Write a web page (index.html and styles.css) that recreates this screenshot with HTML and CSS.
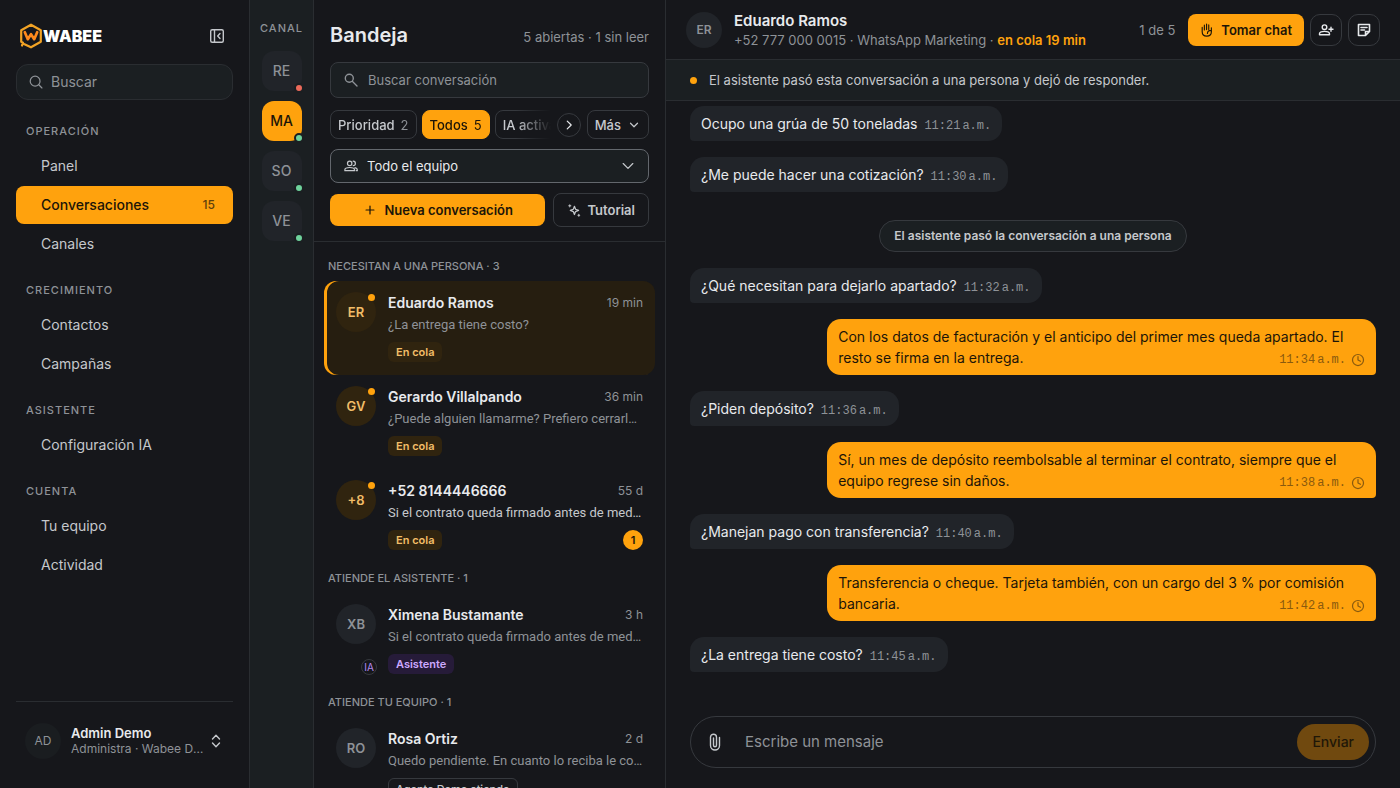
FILE: index.html
```html
<!DOCTYPE html>
<html lang="es">
<head>
<meta charset="utf-8">
<title>Wabee · Bandeja</title>
<meta name="viewport" content="width=device-width, initial-scale=1">
<link rel="stylesheet" href="styles.css">
</head>
<body>
<div class="app">
  <aside class="sidebar">
    <div class="brand">
      <a class="logo" href="#" aria-label="Wabee">
        <svg class="logo-mark" viewBox="0 0 24 26" aria-hidden="true">
          <path d="M5.500 21.200 12 24.300 21.800 18.800V7.200L12 1.700 2.200 7.200V18.800L4 19.800 3 22.500" fill="none" stroke="#f2a325" stroke-width="2.200"/>
          <path d="M5.800 9.200 8.800 16.200 12 11.200 15.200 16.200 18.200 9.200" fill="none" stroke="#ff8a1c" stroke-width="2.700"/>
        </svg>
        <span class="logo-text">WABEE</span>
      </a>
      <button class="icon-plain" aria-label="Contraer menú">
        <svg class="ic16" viewBox="0 0 16 16" aria-hidden="true"><rect x="1.700" y="1.700" width="12.600" height="12.600" rx="1.500"/><path d="M5.500 2v12M11 5.500 8.700 8l2.300 2.500"/></svg>
      </button>
    </div>
    <label class="side-search">
      <svg class="ic14" viewBox="0 0 16 16" aria-hidden="true"><circle cx="7" cy="7" r="5.600"/><path d="m11.200 11.200 3.600 3.600"/></svg>
      <input type="search" placeholder="Buscar" aria-label="Buscar">
    </label>
    <nav class="nav">
      <section class="nav-group">
        <h2>OPERACIÓN</h2>
        <a href="#">Panel</a>
        <a href="#" class="active" aria-current="page">Conversaciones <span>15</span></a>
        <a href="#">Canales</a>
      </section>
      <section class="nav-group">
        <h2>CRECIMIENTO</h2>
        <a href="#">Contactos</a>
        <a href="#">Campañas</a>
      </section>
      <section class="nav-group">
        <h2>ASISTENTE</h2>
        <a href="#">Configuración IA</a>
      </section>
      <section class="nav-group">
        <h2>CUENTA</h2>
        <a href="#">Tu equipo</a>
        <a href="#">Actividad</a>
      </section>
    </nav>
    <button class="account">
      <span class="account-avatar">AD</span>
      <span class="account-text"><strong>Admin Demo</strong><span>Administra · Wabee Demo</span></span>
      <svg class="ic16" viewBox="0 0 16 16" aria-hidden="true"><path d="m4.500 6 3.500-3.700L11.500 6M4.500 10l3.500 3.700 3.500-3.700"/></svg>
    </button>
  </aside>

  <nav class="rail" aria-label="Canal">
    <h2>CANAL</h2>
    <button>RE<i class="off"></i></button>
    <button class="active">MA<i></i></button>
    <button>SO<i></i></button>
    <button>VE<i></i></button>
  </nav>

  <section class="inbox">
    <header class="inbox-head">
      <div class="inbox-title"><h1>Bandeja</h1><span>5 abiertas · 1 sin leer</span></div>
      <label class="inbox-search">
        <svg class="ic16" viewBox="0 0 16 16" aria-hidden="true"><circle cx="6.300" cy="6.300" r="4"/><path d="m9.500 9.500 4.500 4.500"/></svg>
        <input type="search" placeholder="Buscar conversación" aria-label="Buscar conversación">
      </label>
      <div class="filters">
        <div class="filter-scroll">
          <button class="chip">Prioridad <span>2</span></button>
          <button class="chip active">Todos <span>5</span></button>
          <button class="chip">IA activa</button>
        </div>
        <button class="next" aria-label="Más filtros"><svg class="ic14" viewBox="0 0 16 16" aria-hidden="true"><path d="m6 3.500 4.500 4.500L6 12.500"/></svg></button>
        <button class="chip more">Más <svg class="ic14" viewBox="0 0 16 16" aria-hidden="true"><path d="m4 6 4 4 4-4"/></svg></button>
      </div>
      <div class="team">
        <svg class="ic14" viewBox="0 0 16 16" aria-hidden="true"><circle cx="6.500" cy="5" r="2.500"/><path d="M1 13.300v-1.100C1 10.500 4 9.700 6.500 9.700s5.500.8 5.500 2.500v1.100zM10.500 2.500a2.500 2.500 0 0 1 0 5M12.500 9.900c1.500.5 2.700 1.200 2.700 2.300v1.100H14"/></svg>
        <select aria-label="Equipo"><option>Todo el equipo</option></select>
        <svg class="ic14" viewBox="0 0 16 16" aria-hidden="true"><path d="m2.500 5.200 5.500 5.500 5.500-5.500"/></svg>
      </div>
      <div class="actions">
        <button class="primary new"><svg class="ic14" viewBox="0 0 16 16" aria-hidden="true"><path d="M8 3.500v9M3.500 8h9"/></svg>Nueva conversación</button>
        <button class="outline"><svg class="ic14" viewBox="0 0 16 16" aria-hidden="true"><path d="M8.500 3.800 9.800 7.200 13.200 8.500 9.800 9.800 8.500 13.200 7.200 9.800 3.800 8.500 7.200 7.200z"/><path d="M3.200 2v2.400M2 3.200h2.400M13.500 13v2M12.500 14h2" stroke-width="1.200"/></svg>Tutorial</button>
      </div>
    </header>

    <div class="list">
      <h2>NECESITAN A UNA PERSONA · 3</h2>
      <article class="item waiting selected">
        <span class="avatar">ER</span>
        <div class="item-body">
          <div class="row"><h3>Eduardo Ramos</h3><time>19 min</time></div>
          <p>¿La entrega tiene costo?</p>
          <div class="row tags"><span class="tag">En cola</span></div>
        </div>
      </article>
      <article class="item waiting">
        <span class="avatar">GV</span>
        <div class="item-body">
          <div class="row"><h3>Gerardo Villalpando</h3><time>36 min</time></div>
          <p>¿Puede alguien llamarme? Prefiero cerrarlo hoy</p>
          <div class="row tags"><span class="tag">En cola</span></div>
        </div>
      </article>
      <article class="item waiting unread">
        <span class="avatar">+8</span>
        <div class="item-body">
          <div class="row"><h3>+52 8144446666</h3><time>55 d</time></div>
          <p>Si el contrato queda firmado antes de mediodía</p>
          <div class="row tags"><span class="tag">En cola</span><span class="count">1</span></div>
        </div>
      </article>
      <h2>ATIENDE EL ASISTENTE · 1</h2>
      <article class="item">
        <span class="avatar">XB</span>
        <span class="ia">IA</span>
        <div class="item-body">
          <div class="row"><h3>Ximena Bustamante</h3><time>3 h</time></div>
          <p>Si el contrato queda firmado antes de mediodía</p>
          <div class="row tags"><span class="tag assistant">Asistente</span></div>
        </div>
      </article>
      <h2>ATIENDE TU EQUIPO · 1</h2>
      <article class="item">
        <span class="avatar">RO</span>
        <div class="item-body">
          <div class="row"><h3>Rosa Ortiz</h3><time>2 d</time></div>
          <p>Quedo pendiente. En cuanto lo reciba le confirmo</p>
          <div class="row tags"><span class="tag agent">Agente Demo atiende</span></div>
        </div>
      </article>
    </div>
  </section>

  <main class="chat">
    <header class="chat-head">
      <span class="chat-avatar">ER</span>
      <div class="chat-id">
        <h2>Eduardo Ramos</h2>
        <p>+52 777 000 0015 · WhatsApp Marketing · <strong>en cola 19 min</strong></p>
      </div>
      <span class="position">1 de 5</span>
      <button class="primary take">
        <svg class="ic14" viewBox="0 0 16 16" aria-hidden="true"><path d="M5 8V2.500M7.500 7.500V1.200M10 7.500V2.200M2.500 5v5c0 3 2 5 5.200 5 3.300 0 5.300-2 5.300-5V5.500M13 8.500c-2.500 0-4.500.8-4.500 3.500" stroke-width="1.300"/></svg>Tomar chat
      </button>
      <button class="square" aria-label="Asignar"><svg class="ic16" viewBox="0 0 16 16" aria-hidden="true"><circle cx="6.500" cy="5.200" r="2.300"/><path d="M1.500 12.700v-1c0-1.500 2.800-2.300 5-2.300s5 .8 5 2.300v1zM13 5.300v4M11 7.300h4"/></svg></button>
      <button class="square" aria-label="Notas"><svg class="ic16" viewBox="0 0 16 16" aria-hidden="true"><path d="M2.500 2.500h11v7l-4 4h-7zM13.300 9.500H9.500v3.800M5 5.500h6M5 8h3.500" stroke-width="1.600"/></svg></button>
    </header>
    <div class="notice"><i></i>El asistente pasó esta conversación a una persona y dejó de responder.</div>
    <div class="messages">
      <div class="bubble">Ocupo una grúa de 50 toneladas <time>11:21<span>a.m.</span></time></div>
      <div class="bubble">¿Me puede hacer una cotización? <time>11:30<span>a.m.</span></time></div>
      <div class="event">El asistente pasó la conversación a una persona</div>
      <div class="bubble">¿Qué necesitan para dejarlo apartado? <time>11:32<span>a.m.</span></time></div>
      <div class="bubble out">Con los datos de facturación y el anticipo del primer mes queda apartado. El resto se firma en la entrega. <time>11:34<span>a.m.</span><svg class="ic14" viewBox="0 0 16 16" aria-hidden="true"><circle cx="8" cy="8" r="6.300"/><path d="M8 4.200V8l2.800 1.500"/></svg></time></div>
      <div class="bubble">¿Piden depósito? <time>11:36<span>a.m.</span></time></div>
      <div class="bubble out">Sí, un mes de depósito reembolsable al terminar el contrato, siempre que el equipo regrese sin daños. <time>11:38<span>a.m.</span><svg class="ic14" viewBox="0 0 16 16" aria-hidden="true"><circle cx="8" cy="8" r="6.300"/><path d="M8 4.200V8l2.800 1.500"/></svg></time></div>
      <div class="bubble">¿Manejan pago con transferencia? <time>11:40<span>a.m.</span></time></div>
      <div class="bubble out">Transferencia o cheque. Tarjeta también, con un cargo del 3 % por comisión bancaria. <time>11:42<span>a.m.</span><svg class="ic14" viewBox="0 0 16 16" aria-hidden="true"><circle cx="8" cy="8" r="6.300"/><path d="M8 4.200V8l2.800 1.500"/></svg></time></div>
      <div class="bubble">¿La entrega tiene costo? <time>11:45<span>a.m.</span></time></div>
    </div>
    <form class="composer">
      <button type="button" class="icon-plain" aria-label="Adjuntar"><svg class="clip" viewBox="0 0 12 18" aria-hidden="true"><path d="M10.500 4.500v8a4.500 4.500 0 0 1-9 0V4.200a3 3 0 0 1 6 0v8a1.500 1.500 0 0 1-3 0V5"/></svg></button>
      <input type="text" placeholder="Escribe un mensaje" aria-label="Escribe un mensaje">
      <button type="submit" class="send" disabled>Enviar</button>
    </form>
  </main>
</div>
</body>
</html>
```
FILE: styles.css
```css
:root {
  --bg: #16171b;
  --panel: #1b1f22;
  --raised: #212429;
  --line: #2a2d31;
  --line-strong: #36393e;
  --text: #e8eaed;
  --soft: #c5c8cc;
  --muted: #8e9297;
  --accent: #ffa20d;
  --ink: #1c1508;
}
* { box-sizing: border-box; }
body {
  margin: 0;
  background: var(--bg);
  color: var(--text);
  font: 14px/20px Inter, "Liberation Sans", sans-serif;
}
h1, h2, h3, p { margin: 0; }
a { color: inherit; text-decoration: none; }
button, input, select { font: inherit; color: inherit; margin: 0; padding: 0; background: none; border: 0; }
input { min-width: 0; flex: 1; outline: 0; }
input::placeholder { color: var(--muted); opacity: 1; }
svg { flex: none; fill: none; stroke: currentColor; stroke-width: 1.4; stroke-linecap: round; stroke-linejoin: round; }
.ic14 { width: 14px; height: 14px; }
.ic16 { width: 16px; height: 16px; }

.app { display: grid; grid-template-columns: 250px 64px 352px minmax(0, 1fr); height: 100vh; overflow: hidden; }

.sidebar { display: flex; flex-direction: column; padding: 20px 16px; border-right: 1px solid var(--line); min-height: 0; }
.brand { display: flex; align-items: center; justify-content: space-between; height: 32px; padding: 0 8px 0 3px; }
.logo { display: flex; align-items: center; }
.logo-mark { width: 24px; height: 26px; }
.logo-text { font-size: 16px; font-weight: 900; color: #fff; }
.icon-plain { display: flex; color: var(--soft); }
.side-search { display: flex; align-items: center; gap: 8px; height: 36px; margin-top: 12px; padding: 0 12px; background: var(--panel); border: 1px solid var(--line); border-radius: 12px; color: var(--muted); }
.nav { display: flex; flex-direction: column; gap: 17px; margin-top: 21px; flex: 1; min-height: 0; }
.nav-group { display: flex; flex-direction: column; gap: 1px; }
.nav-group h2 { padding-left: 10px; margin-bottom: 5px; font-size: 11px; line-height: 20px; font-weight: 500; letter-spacing: 1px; color: var(--muted); }
.nav-group a { display: flex; align-items: center; justify-content: space-between; height: 38px; padding: 0 18px 0 25px; border-radius: 8px; color: var(--soft); }
.nav-group .active { background: var(--accent); color: var(--ink); font-weight: 500; }
.nav-group a span { font-size: 12px; color: #5f3f0c; }
.account { display: flex; align-items: center; text-align: left; padding: 21px 9px 9px; border-top: 1px solid var(--line); color: var(--soft); }
.account-avatar { display: grid; place-items: center; width: 36px; height: 36px; margin-right: 10px; border-radius: 50%; background: #1a1d20; font-size: 12px; color: var(--muted); }
.account-text { display: flex; flex-direction: column; flex: 1; min-width: 0; line-height: 15px; font-size: 12px; color: var(--muted); }
.account-text strong { font-size: 13px; font-weight: 600; color: var(--text); }
.account-text > span { overflow: hidden; text-overflow: ellipsis; white-space: nowrap; margin-right: 4px; }

.rail { display: flex; flex-direction: column; align-items: center; gap: 10px; padding-top: 18px; background: var(--panel); border-right: 1px solid var(--line); }
.rail h2 { margin-bottom: 3px; font-size: 11px; line-height: 20px; font-weight: 500; letter-spacing: 1px; color: var(--muted); }
.rail button { position: relative; width: 40px; height: 40px; border-radius: 12px; background: var(--raised); color: var(--muted); font-weight: 500; }
.rail .active { background: var(--accent); color: var(--ink); }
.rail i { position: absolute; right: -2px; bottom: -2px; width: 10px; height: 10px; border: 2px solid var(--panel); border-radius: 50%; background: #6fd39c; }
.rail .off { background: #ec6a5a; }

.inbox { display: flex; flex-direction: column; min-height: 0; border-right: 1px solid var(--line); }
.inbox-head { padding: 20px 16px 14px; border-bottom: 1px solid var(--line); }
.inbox-title { display: flex; align-items: center; justify-content: space-between; height: 30px; }
.inbox-title h1 { font-size: 20px; font-weight: 600; }
.inbox-title span { font-size: 13px; color: var(--muted); padding-top: 4px; }
.inbox-search { display: flex; align-items: center; gap: 9px; height: 36px; margin-top: 12px; padding: 0 12px; background: var(--panel); border: 1px solid var(--line-strong); border-radius: 8px; color: var(--muted); font-size: 13px; }
.filters { display: flex; align-items: center; gap: 6px; margin-top: 12px; }
.filter-scroll { display: flex; gap: 5px; flex: 1; min-width: 0; overflow: hidden; mask-image: linear-gradient(90deg, #000 84%, transparent 100%); }
.chip { display: flex; flex: none; align-items: center; justify-content: center; gap: 6px; height: 29px; padding: 0 7px; border: 1px solid var(--line-strong); border-radius: 8px; color: var(--soft); font-size: 13px; font-weight: 500; }
.chip span { font-weight: 400; color: var(--muted); }
.chip.active { background: var(--accent); border-color: var(--accent); color: var(--ink); }
.chip.active span { color: inherit; }
.next { display: grid; place-items: center; width: 24px; height: 24px; border: 1px solid var(--line-strong); border-radius: 50%; }
.team { display: flex; align-items: center; gap: 9px; height: 34px; margin-top: 10px; padding: 0 13px; background: var(--panel); border: 1px solid #63676d; border-radius: 8px; color: var(--soft); font-size: 13px; }
.team select { flex: 1; appearance: none; color: var(--text); outline: 0; }
.actions { display: flex; align-items: center; gap: 8px; margin-top: 10px; }
.primary, .outline { display: flex; align-items: center; justify-content: center; gap: 8px; border-radius: 8px; font-size: 13px; font-weight: 600; }
.primary { height: 32px; background: var(--accent); color: var(--ink); }
.new { flex: 1; }
.outline { height: 34px; padding: 0 13px; gap: 6px; border: 1px solid var(--line-strong); color: var(--soft); }

.list { flex: 1; min-height: 0; overflow: hidden; padding: 14px 10px 0; }
.list h2 { height: 20px; padding-left: 4px; margin-bottom: 5px; font-size: 11px; line-height: 20px; font-weight: 500; color: var(--muted); }
.item { position: relative; display: flex; gap: 12px; height: 94px; padding: 11px 12px; border-radius: 12px; }
.item + h2 { margin-top: 5px; }
.selected { background: #261e10; box-shadow: inset 3px 0 0 var(--accent); }
.avatar { position: relative; display: grid; place-items: center; flex: none; width: 40px; height: 40px; border-radius: 50%; background: var(--raised); color: var(--muted); font-size: 13px; font-weight: 600; }
.waiting .avatar { background: #30240f; color: #f2bd68; }
.waiting .avatar::after { content: ""; position: absolute; top: 2px; right: 1px; width: 7px; height: 7px; border-radius: 50%; background: var(--accent); }
.ia { position: absolute; left: 37px; top: 66px; display: grid; place-items: center; width: 16px; height: 16px; border: 1px solid var(--line-strong); border-radius: 50%; font-size: 10px; line-height: 14px; color: #b58af0; background: var(--bg); }
.item-body { flex: 1; min-width: 0; }
.row { display: flex; align-items: center; justify-content: space-between; }
.item h3 { font-size: 14px; line-height: 22px; font-weight: 600; }
.item time { font-size: 12px; color: var(--muted); }
.item p { font: 13px/22px Roboto, "Liberation Sans", sans-serif; overflow: hidden; white-space: nowrap; text-overflow: ellipsis; color: var(--muted); }
.unread p { color: var(--soft); }
.tags { margin-top: 6px; }
.tag { padding: 0 8px; border-radius: 6px; font-size: 11px; line-height: 20px; font-weight: 600; background: #30240f; color: #f2bd68; }
.assistant { background: #261b39; color: #cda9ff; }
.agent { padding: 0 7px; background: none; border: 1px solid var(--line-strong); color: var(--soft); font-weight: 500; }
.count { width: 20px; border-radius: 50%; background: var(--accent); color: var(--ink); font-size: 11px; line-height: 20px; font-weight: 600; text-align: center; }

.chat { display: flex; flex-direction: column; min-width: 0; min-height: 0; }
.chat-head { display: flex; align-items: center; height: 60px; flex: none; padding: 0 20px; border-bottom: 1px solid var(--line); }
.chat-avatar { display: grid; place-items: center; width: 36px; height: 36px; margin-right: 12px; border-radius: 50%; background: var(--raised); color: var(--muted); font-size: 12px; font-weight: 600; }
.chat-id { flex: 1; min-width: 0; }
.chat-id h2 { font-size: 15px; line-height: 20px; font-weight: 600; }
.chat-id p { font-size: 13px; line-height: 18px; color: var(--muted); white-space: nowrap; }
.chat-id strong { font-weight: 600; color: var(--accent); }
.position { font-size: 13px; color: var(--muted); margin-right: 13px; }
.take { padding: 0 12px; gap: 7px; }
.square { display: grid; place-items: center; width: 32px; height: 32px; margin-left: 6px; border: 1px solid var(--line-strong); border-radius: 10px; }
.notice { display: flex; align-items: center; gap: 12px; flex: none; height: 41px; padding: 0 24px; background: var(--panel); border-bottom: 1px solid var(--line); font-size: 13px; color: var(--soft); }
.notice i { width: 7px; height: 7px; border-radius: 50%; background: var(--accent); }
.messages { flex: 1; min-height: 0; overflow: hidden; display: flex; flex-direction: column; align-items: flex-start; gap: 16px; padding: 5px 24px 0; }
.bubble { flex: none; max-width: 80%; padding: 7px 11px; border-radius: 14px 14px 14px 4px; background: var(--raised); line-height: 21px; }
.bubble time { margin-left: 3px; font: 12px/12px "Liberation Mono", monospace; color: var(--muted); }
.bubble time span { margin-left: 2px; }
.out { align-self: flex-end; border-radius: 14px 14px 4px 14px; background: var(--accent); color: var(--ink); }
.out time { float: right; display: flex; align-items: center; height: 14px; margin-top: 6px; color: #8a5a0e; }
.out time svg { margin-left: 5px; }
.event { align-self: center; flex: none; margin-top: 12px; padding: 0 14px; border: 1px solid var(--line-strong); border-radius: 16px; background: var(--panel); font-size: 12px; line-height: 30px; font-weight: 600; color: var(--soft); }
.composer { display: flex; align-items: center; flex: none; height: 52px; margin: 0 24px 20px; padding: 0 6px 0 18px; border: 1px solid var(--line-strong); border-radius: 26px; }
.clip { width: 12px; height: 18px; }
.composer input { margin-left: 24px; font-size: 15px; }
.send { height: 36px; padding: 0 15px; border-radius: 18px; background: #70490f; color: #1f1708; font-weight: 500; }
```
